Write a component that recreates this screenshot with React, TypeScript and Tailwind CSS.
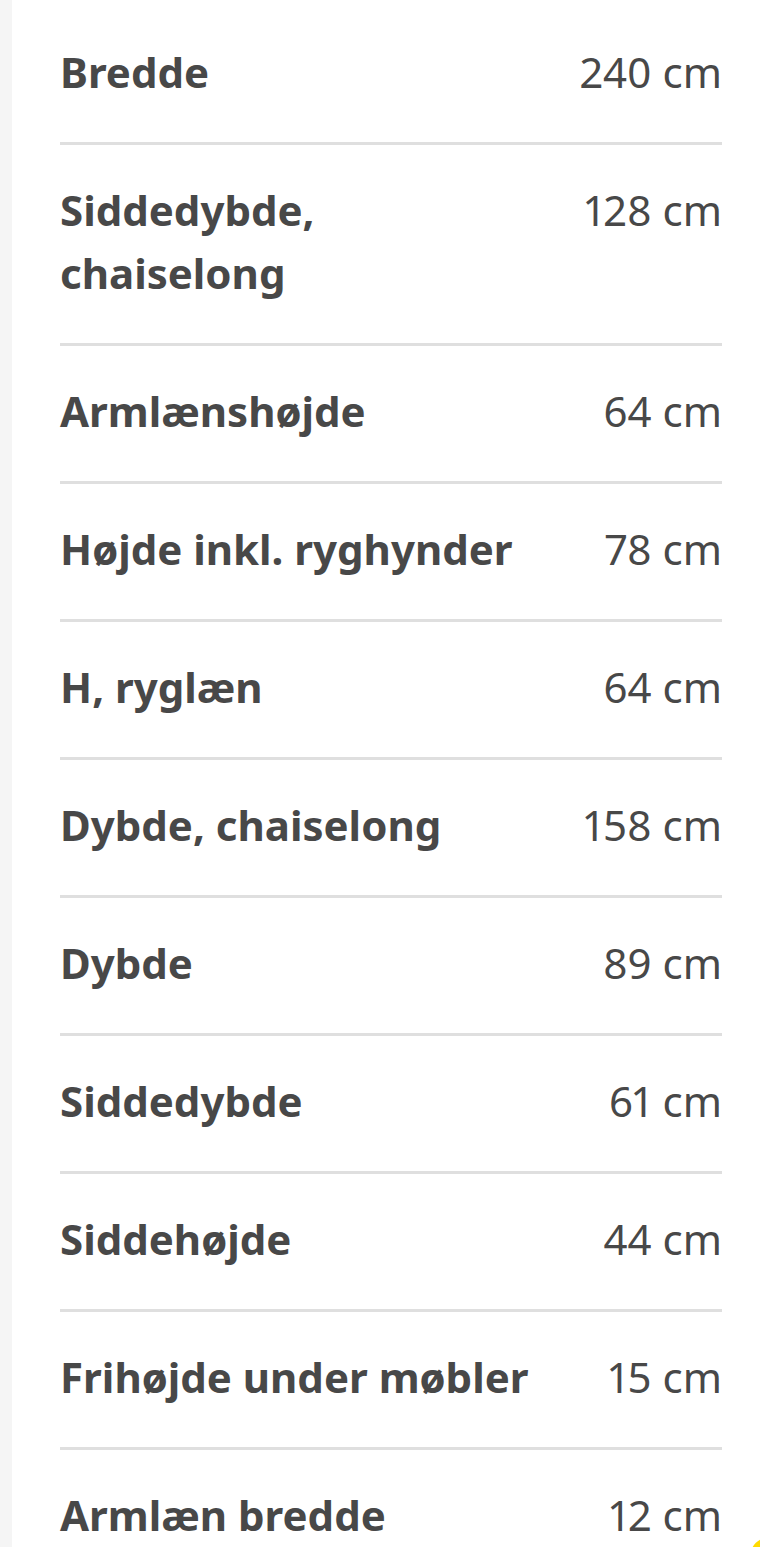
const rows: { label: string; value: string }[] = [
  { label: 'Bredde', value: '240 cm' },
  { label: 'Siddedybde, chaiselong', value: '128 cm' },
  { label: 'Armlænshøjde', value: '64 cm' },
  { label: 'Højde inkl. ryghynder', value: '78 cm' },
  { label: 'H, ryglæn', value: '64 cm' },
  { label: 'Dybde, chaiselong', value: '158 cm' },
  { label: 'Dybde', value: '89 cm' },
  { label: 'Siddedybde', value: '61 cm' },
  { label: 'Siddehøjde', value: '44 cm' },
  { label: 'Frihøjde under møbler', value: '15 cm' },
  { label: 'Armlæn bredde', value: '12 cm' },
];

export default function App() {
  return (
    <div className="relative flex h-[1547px] overflow-hidden bg-white font-['Noto_Sans',sans-serif] text-[#484848]">
      {/* left edge strip */}
      <div className="w-3 shrink-0 bg-[#f5f5f5]" />

      <div className="flex-1 pl-12 pr-[38px] pt-[7px]">
        {rows.map((row, i) => (
          <div
            key={row.label}
            className={
              'flex items-start justify-between pt-[33px] pb-[39px] ' +
              (i < rows.length - 1 ? 'border-b-[3px] border-[#dfdfdf]' : '')
            }
          >
            <div className="min-w-0 flex-1 text-[42px] font-bold leading-[63px]">{row.label}</div>
            <div className="ml-12 shrink-0 whitespace-nowrap text-[42px] leading-[63px] proportional-nums">
              {row.value}
            </div>
          </div>
        ))}
      </div>

      {/* yellow button peeking in at bottom right */}
      <div className="absolute -bottom-[30px] -right-[30px] h-[40px] w-[40px] rounded-full bg-[#ffdb00]" />
    </div>
  );
}
